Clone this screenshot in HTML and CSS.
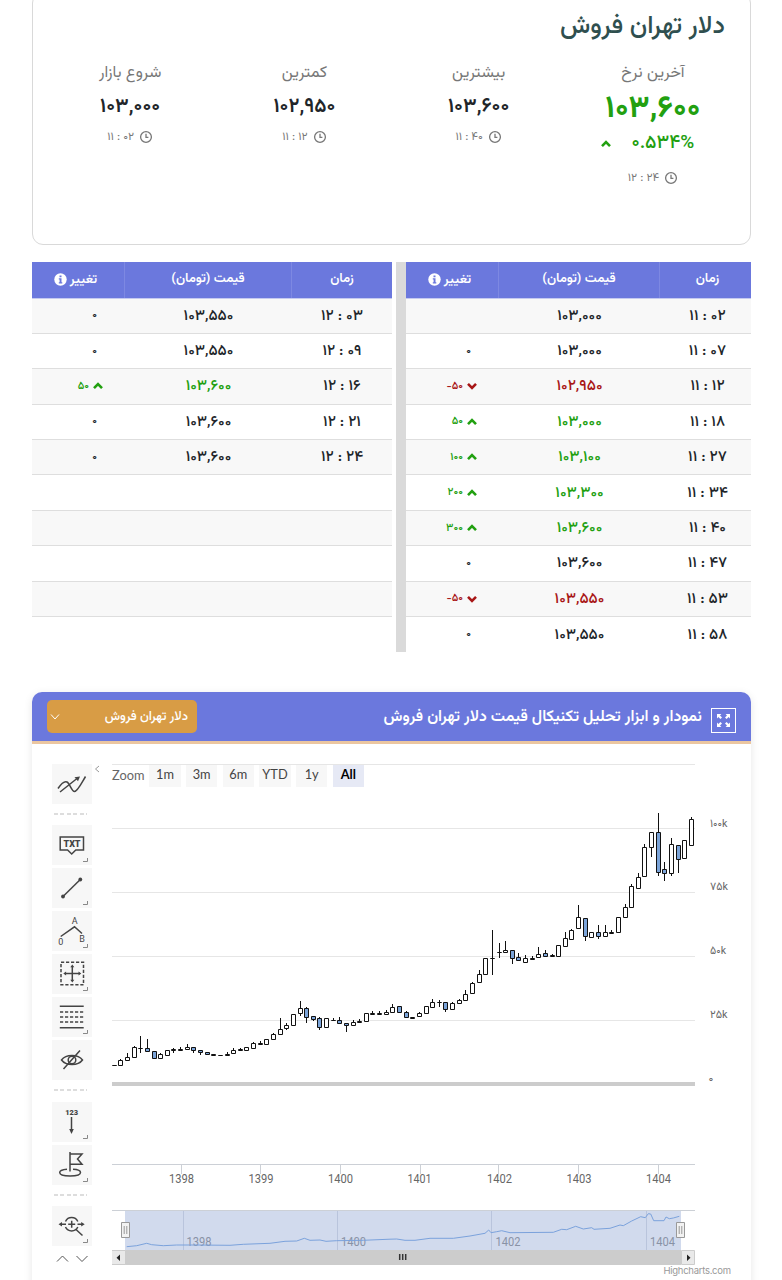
FILE: index.html
```html
<!DOCTYPE html>
<html lang="fa" dir="rtl">
<head>
    <meta charset="UTF-8">
    <meta name="viewport" content="width=device-width, initial-scale=1.0">
    <title>دلار تهران فروش</title>
    <link rel="stylesheet" href="styles.css">
</head>
<body>
    <svg class="defs" width="0" height="0">
        <symbol id="clock" viewBox="0 0 14 14"><circle cx="7" cy="7" r="5.4"/><path d="M7 3.8V7.4H9.4"/></symbol>
        <symbol id="up" viewBox="0 0 10 8"><path d="M1 6.2 5 2.2 9 6.2"/></symbol>
        <symbol id="down" viewBox="0 0 10 8"><path d="M1 1.8 5 5.8 9 1.8"/></symbol>
        <symbol id="corner" viewBox="0 0 5 4"><path d="M0 3.5H4.5V0"/></symbol>
    </svg>

    <section class="summary">
        <h1>دلار تهران فروش</h1>
        <div class="stats">
            <div class="stat main">
                <span class="label">آخرین نرخ</span>
                <span class="value">۱۰۳,۶۰۰</span>
                <span class="percent"><svg class="arrow"><use href="#up"/></svg><span>۰.۵۳۴%</span></span>
                <span class="time"><span>۱۲ : ۲۴</span><svg class="clock"><use href="#clock"/></svg></span>
            </div>
            <div class="stat">
                <span class="label">بیشترین</span>
                <span class="value">۱۰۳,۶۰۰</span>
                <span class="time"><span>۱۱ : ۴۰</span><svg class="clock"><use href="#clock"/></svg></span>
            </div>
            <div class="stat">
                <span class="label">کمترین</span>
                <span class="value">۱۰۲,۹۵۰</span>
                <span class="time"><span>۱۱ : ۱۲</span><svg class="clock"><use href="#clock"/></svg></span>
            </div>
            <div class="stat">
                <span class="label">شروع بازار</span>
                <span class="value">۱۰۳,۰۰۰</span>
                <span class="time"><span>۱۱ : ۰۲</span><svg class="clock"><use href="#clock"/></svg></span>
            </div>
        </div>
    </section>

    <section class="prices">
        <div class="table first" id="tableFirst"></div>
        <div class="separator"></div>
        <div class="table second" id="tableSecond"></div>
    </section>

    <section class="chart-card">
        <div class="chart-header">
            <svg class="fullscreen" viewBox="0 0 25 25">
                <rect x=".5" y=".5" width="24" height="24"/>
                <path d="M6 6h4.4L9 7.4l2 2L9.4 11l-2-2L6 10.4zM19 6h-4.4L16 7.4l-2 2 1.6 1.6 2-2 1.4 1.4zM6 19h4.4L9 17.6l2-2L9.4 14l-2 2L6 14.6zM19 19h-4.4l1.4-1.4-2-2 1.6-1.6 2 2 1.4-1.4z"/>
            </svg>
            <h2>نمودار و ابزار تحلیل تکنیکال قیمت دلار تهران فروش</h2>
            <div class="select">
                <span>دلار تهران فروش</span>
                <svg viewBox="0 0 10 8"><path d="M1 1.5 5 6 9 1.5"/></svg>
            </div>
        </div>

        <div class="chart-body">
            <div class="toolbar">
                <div class="tool"><svg viewBox="0 0 40 40"><path d="M6 24.5C9 20 12 16.5 15 18S19.500 27.500 22.500 27.500 29 20 33.500 12.500M8 28 25 14.500"/><path class="fill" d="M28 12.500 22.500 13.300 26 17.300z"/></svg></div>
                <div class="divider"></div>
                <div class="tool"><svg viewBox="0 0 40 40"><path d="M8.200 12H31.500V25H23.800L19.700 29 15.600 25H8.200z"/><text class="bold" x="20" y="21.800" font-size="9" textLength="17" lengthAdjust="spacingAndGlyphs">TXT</text></svg><svg class="corner"><use href="#corner"/></svg></div>
                <div class="tool"><svg viewBox="0 0 40 40"><path d="M11 28.500 28.300 11.500"/><circle class="fill" cx="11" cy="28.500" r="1.900"/><circle class="fill" cx="28.300" cy="11.500" r="1.900"/></svg><svg class="corner"><use href="#corner"/></svg></div>
                <div class="tool"><svg viewBox="0 0 40 40"><path d="M8.700 25.500 22.500 15.800 30 22.500"/><text x="22.700" y="13" font-size="9">A</text><text x="8.800" y="34" font-size="9">0</text><text x="30" y="31" font-size="9">B</text></svg><svg class="corner"><use href="#corner"/></svg></div>
                <div class="tool"><svg viewBox="0 0 40 40"><rect class="dash" x="9" y="8.300" width="22.500" height="22.500"/><path d="M20.300 12V27M13 19.500H27.500"/><path class="fill" d="M20.300 10.500l2 2.800h-4zM20.300 28.500l2-2.800h-4zM11.300 19.500l2.800-2v4zM29.300 19.500l-2.800-2v4z"/></svg><svg class="corner"><use href="#corner"/></svg></div>
                <div class="tool"><svg viewBox="0 0 40 40"><path d="M7.800 9.300H31.700M7.800 30.700H31.700"/><path class="dash" d="M8 15H31.700M8 20H31.700M8 25H31.700"/></svg><svg class="corner"><use href="#corner"/></svg></div>
                <div class="tool"><svg viewBox="0 0 40 40"><path d="M9.500 20C14 14 26 14 30.500 20 26 26 14 26 9.500 20zM28 10.500 11.500 29"/><circle cx="20" cy="20" r="3.800"/></svg></div>
                <div class="divider"></div>
                <div class="tool"><svg viewBox="0 0 40 40"><text class="bold" x="19.700" y="13" font-size="7.600" textLength="13" lengthAdjust="spacingAndGlyphs">123</text><path d="M19.500 15V28"/><path class="fill" d="M19.500 32l-2.300-5h4.600z"/></svg><svg class="corner"><use href="#corner"/></svg></div>
                <div class="tool"><svg viewBox="0 0 40 40"><path d="M18 7V26.500M18 9H30L25.500 14 30 19.300H18M15 24.300C10 24.700 7.700 26 7.700 27.500 7.700 32.200 28.500 32.200 28.500 27.500 28.500 25.800 26 24.500 21 24.300"/></svg><svg class="corner"><use href="#corner"/></svg></div>
                <div class="divider"></div>
                <div class="tool"><svg viewBox="0 0 40 40"><path d="M13.500 15.500A6.800 6.800 0 0 1 25.800 15.500M13.500 21A6.800 6.800 0 0 0 25.800 21M19.700 14.800V21.800M16.200 18.300H23.200M24 23.500 30.500 29.500M9 18.300H14M25.500 18.300H30"/><path class="fill" d="M6.500 18.300l3.500-2.300v4.600zM32.700 18.300l-3.500-2.300v4.600z"/></svg><svg class="corner"><use href="#corner"/></svg></div>
                <div class="scroll"><svg viewBox="0 0 34 10"><path d="M2 7.500 7.500 2 13 7.500M21.500 2 27 7.500 32.500 2"/></svg></div>
            </div>
            <svg class="collapse" viewBox="0 0 6 8"><path d="M5 1 1.500 4 5 7"/></svg>

            <div class="chart">
                <div class="zoom">
                    <span class="zoom-label">Zoom</span>
                    <span class="range">1m</span>
                    <span class="range">3m</span>
                    <span class="range">6m</span>
                    <span class="range">YTD</span>
                    <span class="range">1y</span>
                    <span class="range active">All</span>
                </div>
                <svg class="plot" viewBox="112 787 635 493" direction="ltr">
                    <path class="grid" d="M112 828.500H695M112 892.500H695M112 956.500H695M112 1020.500H695"/>
                    <path class="resizer" d="M112 1084H695"/>
                    <g class="y-labels">
                        <text x="710" y="826.500" textLength="17.500" lengthAdjust="spacingAndGlyphs">۱۰۰k</text>
                        <text x="710" y="890" textLength="18" lengthAdjust="spacingAndGlyphs">۷۵k</text>
                        <text x="710" y="954" textLength="16" lengthAdjust="spacingAndGlyphs">۵۰k</text>
                        <text x="710" y="1018" textLength="17.500" lengthAdjust="spacingAndGlyphs">۲۵k</text>
                        <text x="708.500" y="1082">۰</text>
                    </g>
                    <g id="candles"></g>
                    <path class="axis" d="M112 1164.500H695M181.500 1164V1174M260.500 1164V1174M340.500 1164V1174M420.500 1164V1174M498.500 1164V1174M578.500 1164V1174M658.500 1164V1174"/>
                    <g class="x-labels">
                        <text x="169" y="1183" textLength="25" lengthAdjust="spacingAndGlyphs">1398</text>
                        <text x="248.500" y="1183" textLength="25" lengthAdjust="spacingAndGlyphs">1399</text>
                        <text x="328" y="1183" textLength="25" lengthAdjust="spacingAndGlyphs">1400</text>
                        <text x="407.500" y="1183" textLength="24" lengthAdjust="spacingAndGlyphs">1401</text>
                        <text x="487" y="1183" textLength="25" lengthAdjust="spacingAndGlyphs">1402</text>
                        <text x="566.500" y="1183" textLength="25" lengthAdjust="spacingAndGlyphs">1403</text>
                        <text x="646" y="1183" textLength="25" lengthAdjust="spacingAndGlyphs">1404</text>
                    </g>
                    <path class="axis" d="M112 1210.500H695"/>
                    <g class="x-labels nav">
                        <text x="186.500" y="1246" textLength="25" lengthAdjust="spacingAndGlyphs">1398</text>
                        <text x="341" y="1246" textLength="25" lengthAdjust="spacingAndGlyphs">1400</text>
                        <text x="495.500" y="1246" textLength="25" lengthAdjust="spacingAndGlyphs">1402</text>
                        <text x="650" y="1246" textLength="25" lengthAdjust="spacingAndGlyphs">1404</text>
                    </g>
                    <rect class="mask" x="125" y="1211" width="556" height="39"/>
                    <path class="nav-grid" d="M183.500 1211V1250M337.500 1211V1250M491.500 1211V1250M646.500 1211V1250"/>
                    <polyline class="nav-line" points="126.700,1246.700 136.700,1245.700 146.700,1243.300 151.700,1244.700 163.300,1245.700 176.700,1245 196.700,1245 230,1245.300 243.300,1244.300 270,1243.300 285,1241.300 296.700,1241 304.300,1238.300 310,1240.300 320,1240 326,1241.300 336.700,1240.700 363.300,1240.300 390,1239.200 396.700,1239 405,1240.300 415,1240.300 430,1238.300 453.300,1238.300 470,1236 485,1233.300 488.700,1230 491,1232.700 496.700,1231.700 501.700,1230.700 510,1232.700 553.300,1232.300 561.700,1229.300 566.700,1229.700 575.700,1226.300 583.300,1229 591.700,1227.700 594,1229.300 610,1228.300 620,1225 623.300,1225.700 631.700,1221 640.700,1216.700 645.300,1217.700 648.300,1213.700 650.700,1214 653.700,1220.700 664,1220.700 666,1217 669.300,1218.700 673.300,1218 679.300,1216.300"/>
                    <rect class="scrollbar" x="125" y="1250" width="556" height="15"/>
                    <path class="scroll-button" d="M111.500 1250.500H125.500V1264.500H111.500zM681.500 1250.500H694.500V1264.500H681.500z"/>
                    <path class="scroll-icon" d="M120 1254.500V1261L116.500 1257.700zM687 1254.500V1261L690.500 1257.700z"/>
                    <path class="grip" d="M399.700 1254V1260M402.700 1254V1260M405.700 1254V1260"/>
                    <path class="handle" d="M121.500 1222.500H129.500V1237.500H121.500zM124.200 1226V1234M126.800 1226V1234M676.500 1222.500H684.500V1237.500H676.500zM679.200 1226V1234M681.800 1226V1234"/>
                    <text class="credits" x="663.500" y="1274" textLength="67.500">Highcharts.com</text>
                </svg>
            </div>
        </div>
    </section>
    <script src="script.js"></script>
</body>
</html>
```
FILE: styles.css
```css
* {
    margin: 0;
    padding: 0;
    box-sizing: border-box;
}

body {
    background-color: #fff;
    color: #212529;
    font-family: Vazirmatn, 'Noto Sans Arabic', 'DejaVu Sans Condensed', 'DejaVu Sans', sans-serif;
    padding: 0 31px 0 32px;
    height: 1280px;
    overflow: hidden;
}

svg {
    fill: none;
    stroke: currentColor;
    display: block;
    flex-shrink: 0;
}

.defs {
    position: absolute;
}

/* Summary */
.summary {
    height: 253px;
    margin-top: -8px;
    margin-bottom: 17px;
    padding: 15px 10px 0;
    border: 1px solid #d9d9d9;
    border-radius: 11px;
}

h1 {
    color: #2f4f4f;
    font-size: 25.4px;
    font-weight: 500;
    line-height: 38px;
    padding-right: 15px;
}

.stats {
    display: flex;
    padding-top: 16px;
}

.stat {
    flex: 1;
    display: flex;
    flex-direction: column;
    align-items: center;
    direction: ltr;
}

.label {
    color: #777;
    font-size: 16px;
    line-height: 24px;
    direction: rtl;
}

.value {
    font-size: 20.3px;
    font-weight: 600;
    line-height: 42px;
    letter-spacing: -2.4px;
}

.time {
    display: flex;
    align-items: center;
    gap: 5px;
    color: #777;
    font-size: 11.5px;
    line-height: 18px;
    letter-spacing: -1.1px;
}

.clock {
    width: 14px;
    height: 14px;
    stroke-width: 1.3;
}

.main .value {
    color: #22a010;
    font-size: 31px;
    font-weight: 700;
    line-height: 48px;
    letter-spacing: -3.7px;
}

.percent {
    display: flex;
    align-items: center;
    gap: 20px;
    padding-right: 10px;
    color: #22a010;
    font-size: 19px;
    font-weight: 500;
    line-height: 20px;
    letter-spacing: -1.2px;
}

.main .time {
    margin-top: 15px;
}

.arrow {
    width: 10px;
    height: 8px;
    stroke-width: 2.6;
}

/* Price tables */
.prices {
    display: flex;
    height: 390px;
    margin-bottom: 40px;
}

.first {
    width: 345px;
}

.second {
    width: 360px;
    margin-right: 4px;
}

.separator {
    width: 10px;
    background-color: #dadada;
}

.row {
    display: grid;
    height: 35.4px;
    align-items: center;
    text-align: center;
    border-bottom: 1px solid #dedede;
    font-size: 15.3px;
    font-weight: 500;
}

.first .row {
    grid-template-columns: 91px 161px 93px;
}

.second .row {
    grid-template-columns: 100px 167px 93px;
}

.first .time-cell {
    padding-left: 4px;
}

.row:nth-child(even) {
    background-color: #f8f8f8;
}

.row:last-child {
    border-bottom: none;
}

.row.head {
    height: 36.5px;
    align-items: stretch;
    background-color: #6b78dd;
    border-bottom: 1px solid #c5caf0;
    color: #fff;
    font-size: 13.2px;
    font-weight: 600;
    line-height: 34px;
}

.head span + span {
    border-right: 1px solid #7d88e2;
}

.first .head span:first-child {
    padding-left: 4px;
}

.head .change-title {
    display: flex;
    align-items: center;
    justify-content: center;
    gap: 3px;
    padding-right: 5px;
}

.info {
    width: 13px;
    height: 13px;
    fill: #fff;
    stroke: none;
}

.info path {
    fill: #6b78dd;
}

.number {
    direction: ltr;
    letter-spacing: -1.85px;
}

.change {
    display: flex;
    justify-content: flex-end;
    align-items: center;
    gap: 4px;
    direction: ltr;
    padding-right: 22px;
    font-size: 11px;
    letter-spacing: -0.7px;
}

.change.flat {
    padding-right: 28px;
}

.up {
    color: #22a010;
}

.down {
    color: #a81616;
}

/* Chart */
.chart-card {
    height: 620px;
    border-radius: 10px 10px 0 0;
    box-shadow: 0 2px 8px rgba(0, 0, 0, 0.1);
}

.chart-header {
    display: flex;
    align-items: flex-start;
    height: 52px;
    padding: 8px 15px 0 15px;
    background-color: #6b78dd;
    border-bottom: 3px solid #ebc6a0;
    border-radius: 10px 10px 0 0;
    color: #fff;
}

.fullscreen {
    width: 25px;
    height: 25px;
    margin-top: 8px;
}

.fullscreen path {
    fill: #fff;
    stroke: none;
}

h2 {
    flex: 1;
    padding-right: 9px;
    font-size: 15.8px;
    font-weight: 600;
    line-height: 34px;
    white-space: nowrap;
}

.select {
    display: flex;
    align-items: center;
    justify-content: space-between;
    width: 150px;
    height: 33px;
    padding: 0 9px 0 3px;
    border-radius: 5px;
    background-color: #d89c45;
    font-size: 12.8px;
    font-weight: 500;
}

.select svg {
    width: 10px;
    height: 8px;
    stroke-width: 1;
}

.chart-body {
    display: flex;
    direction: ltr;
    padding: 20px 0 0 20px;
}

.toolbar {
    display: flex;
    flex-direction: column;
    gap: 3px;
    width: 40px;
}

.tool {
    position: relative;
    height: 40px;
    background-color: #f7f7f7;
    color: #444;
}

.tool svg {
    stroke-width: 1.5;
}

.tool .fill {
    fill: #444;
    stroke: none;
}

.tool .dash {
    stroke-dasharray: 3.2 1.8;
}

.tool text {
    fill: #444;
    stroke: none;
    font-family: Roboto, sans-serif;
    text-anchor: middle;
}

.tool .bold {
    font-weight: 900;
}

.tool .corner {
    position: absolute;
    right: 4px;
    bottom: 3px;
    width: 5px;
    height: 4px;
    stroke: #888;
    stroke-width: 1;
}

.divider {
    height: 15.3px;
    margin: 0 5px 0 2px;
    background: repeating-linear-gradient(to right, #ddd 0 4px, transparent 4px 6.5px) 0 6px / 100% 2px no-repeat;
}

.scroll svg {
    width: 34px;
    height: 10px;
    margin: 5px 0 0 3px;
    stroke: #555;
}

.collapse {
    width: 6px;
    height: 8px;
    margin: 1px 0 0 2px;
    stroke: #999;
}

.chart {
    width: 635px;
    margin-left: 12px;
}

.zoom {
    display: flex;
    align-items: center;
    gap: 5.2px;
    width: 583px;
    height: 23px;
    border-top: 1px solid #e6e6e6;
    font-family: Lato, sans-serif;
    font-size: 12.8px;
    color: #444;
}

.zoom-label {
    width: 32px;
    color: #666;
    line-height: 18px;
    margin-bottom: 3px;
}

.range {
    width: 31.5px;
    height: 22px;
    line-height: 19px;
    text-align: center;
    background-color: #f7f7f7;
}

.range.active {
    background-color: #e6e9f5;
    color: #000;
    font-weight: bold;
}

.plot {
    width: 635px;
    height: 493px;
    font-family: Roboto, sans-serif;
}

.plot text {
    stroke: none;
}

.grid {
    stroke: #e6e6e6;
}

.resizer {
    stroke: #ccc;
    stroke-width: 4;
}

.axis {
    stroke: #ccd0d6;
}

.y-labels {
    fill: #666;
    font-family: Vazirmatn, 'DejaVu Sans', sans-serif;
    font-size: 11.5px;
}

.x-labels {
    fill: #666;
    font-size: 12.8px;
}

.x-labels.nav {
    fill: #999;
}

.mask {
    fill: rgba(102, 133, 194, 0.3);
    stroke: none;
}

.nav-grid {
    stroke: #b9c4dc;
}

.nav-line {
    stroke: #7ba2dc;
}

.scrollbar {
    fill: #ccc;
    stroke: none;
}

.scroll-button {
    fill: #e9e9e9;
    stroke: #ccc;
}

.scroll-icon {
    fill: #222;
    stroke: none;
}

.grip {
    stroke: #333;
    stroke-width: 1.5;
}

.handle {
    fill: #f2f2f2;
    stroke: #999;
}

.candle {
    fill: #fff;
    stroke: #111;
}

.candle.fall {
    fill: #7ba4d9;
}

.credits {
    fill: #999;
    font-size: 9.5px;
    font-family: Inter, sans-serif;
}
```
FILE: script.js
```js
const firstRows = [
    ['۱۱ : ۰۲', '۱۰۳,۰۰۰', ''],
    ['۱۱ : ۰۷', '۱۰۳,۰۰۰', '۰'],
    ['۱۱ : ۱۲', '۱۰۲,۹۵۰', '-۵۰', 'down'],
    ['۱۱ : ۱۸', '۱۰۳,۰۰۰', '۵۰', 'up'],
    ['۱۱ : ۲۷', '۱۰۳,۱۰۰', '۱۰۰', 'up'],
    ['۱۱ : ۳۴', '۱۰۳,۳۰۰', '۲۰۰', 'up'],
    ['۱۱ : ۴۰', '۱۰۳,۶۰۰', '۳۰۰', 'up'],
    ['۱۱ : ۴۷', '۱۰۳,۶۰۰', '۰'],
    ['۱۱ : ۵۳', '۱۰۳,۵۵۰', '-۵۰', 'down'],
    ['۱۱ : ۵۸', '۱۰۳,۵۵۰', '۰']
];

const secondRows = [
    ['۱۲ : ۰۳', '۱۰۳,۵۵۰', '۰'],
    ['۱۲ : ۰۹', '۱۰۳,۵۵۰', '۰'],
    ['۱۲ : ۱۶', '۱۰۳,۶۰۰', '۵۰', 'up'],
    ['۱۲ : ۲۱', '۱۰۳,۶۰۰', '۰'],
    ['۱۲ : ۲۴', '۱۰۳,۶۰۰', '۰'],
    ['', '', ''], ['', '', ''], ['', '', ''], ['', '', ''], ['', '', '']
];

function renderTable(id, rows) {
    let html = `<div class="row head"><span>زمان</span><span>قیمت (تومان)</span><span class="change-title">تغییر
        <svg class="info" viewBox="0 0 13 13"><circle cx="6.5" cy="6.5" r="6.2"/><path d="M5.500 2.500h2v1.800h-2zM4.800 5.300h2.700v4h.8v1.200H4.800V9.300h.8V6.500h-.8z"/></svg></span></div>`;
    rows.forEach(([time, price, change, dir = '']) => {
        const arrow = dir ? `<svg class="arrow"><use href="#${dir}"/></svg>` : '';
        html += `<div class="row"><span class="number time-cell">${time}</span><span class="number ${dir}">${price}</span>
            <span class="change ${dir || 'flat'}"><span>${change}</span>${arrow}</span></div>`;
    });
    document.getElementById(id).innerHTML = html;
}

renderTable('tableFirst', firstRows);
renderTable('tableSecond', secondRows);

// high, body top, body bottom, low, 1 = falling (in thirds of a pixel below y = 800)
const candles = [
    [796,796,797,797],[777,780,797,797],[760,773,782,782],[738,742,773,773],[708,744,746,758],[717,745,755,755,1],
    [754,754,776,776,1],[760,764,775,775],[752,752,766,766],[744,749,751,756],[741,748,751,751],[733,743,748,748],
    [743,743,752,756,1],[752,752,758,764,1],[758,758,764,764,1],[764,764,767,767],[766,766,767,767],[757,763,767,767],
    [746,752,761,761],[745,748,751,751],[743,743,752,752],[727,730,744,744],[724,731,734,734],[718,718,734,734],
    [700,703,718,718],[655,689,704,704],[670,676,686,689],[643,643,677,677],[603,625,640,647],[622,625,653,668,1],
    [650,650,658,662,1],[652,655,683,688,1],[655,655,682,682],[656,661,662,662],[652,662,671,671,1],[671,671,676,694,1],
    [661,667,677,677],[657,664,667,667],[641,641,665,665],[634,641,644,644],[634,641,644,644],[631,638,644,644],
    [613,623,637,637],[619,619,638,638,1],[634,637,653,653,1],[652,652,654,654],[638,640,650,650],[619,619,640,640],
    [598,607,623,623],[601,606,608,619],[607,607,629,635,1],[608,610,628,628],[597,602,611,611],[571,584,602,602],
    [548,550,580,580],[512,523,548,548],[476,476,523,523],[391,474,476,524],[430,456,458,471],[424,451,458,458],
    [451,451,476,491,1],[461,473,482,482,1],[467,476,486,486],[470,475,477,477],[442,464,473,473],[452,460,470,470,1],
    [463,467,469,469],[437,437,470,470],[398,416,440,440],[387,391,418,418],[316,352,386,386],[355,355,410,422,1],
    [398,398,413,413],[376,398,410,415,1],[376,398,410,410],[392,398,399,399],[352,352,398,398],[314,323,353,353],
    [254,260,323,323],[221,233,266,266],[133,143,230,230],[97,97,143,170],[41,98,218,227,1],[187,209,221,242,1],
    [115,134,221,226],[137,137,178,218,1],[122,122,176,176],[53,59,137,137]
];

const y = v => Math.floor(800 + v / 3) + 0.5;

document.getElementById('candles').innerHTML = candles.map(([high, top, bottom, low, fall], i) => {
    const x = Math.round(113.8 + i * 6.633) + 0.5;
    return `<path class="candle ${fall ? 'fall' : ''}" d="M${x} ${y(high) - 0.5}V${y(top)}M${x} ${y(bottom)}V${y(low) + 0.5}M${x - 2} ${y(top)}H${x + 2}V${y(bottom)}H${x - 2}z"/>`;
}).join('');
```
